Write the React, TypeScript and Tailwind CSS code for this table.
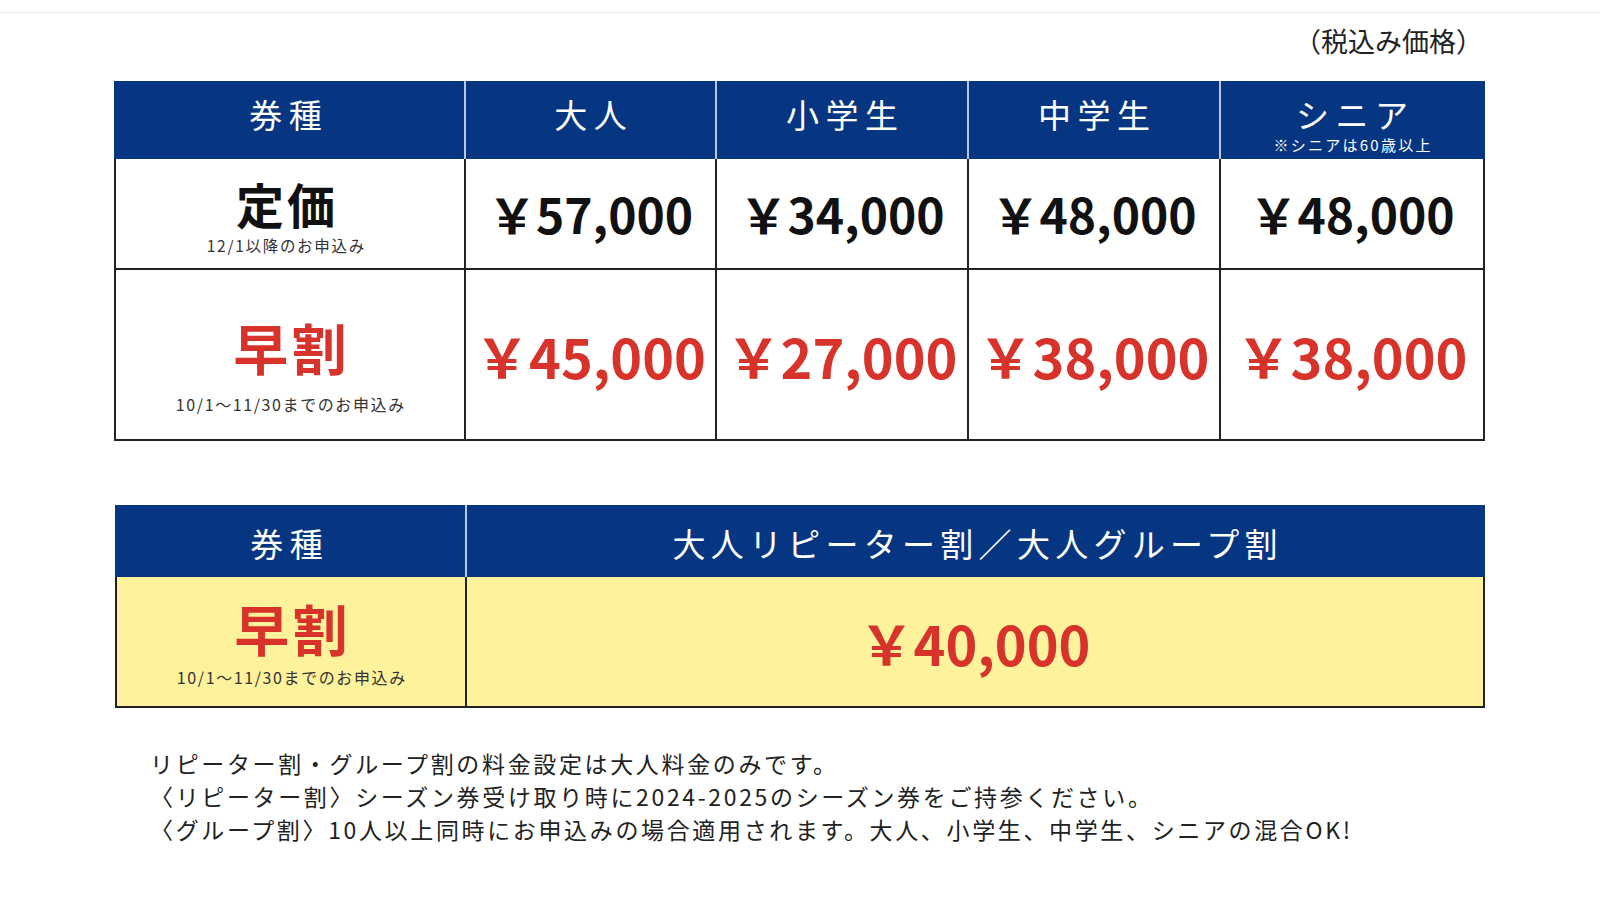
import React from 'react'

const font = { fontFamily: '"Noto Sans CJK JP", "Noto Sans", sans-serif' }

const heads = ['大人', '小学生', '中学生']
const regular = ['￥57,000', '￥34,000', '￥48,000', '￥48,000']
const early = ['￥45,000', '￥27,000', '￥38,000', '￥38,000']

function HeadCell({ children, last, first }: { children: React.ReactNode; last?: boolean; first?: boolean }) {
  return (
    <div
      className={
        'flex flex-col items-center bg-[#063681] text-white ' +
        (last ? '' : 'border-r-2 border-[#b9c6e0] ') +
        (first ? 'pr-[9px]' : '')
      }
    >
      {children}
    </div>
  )
}

export default function App() {
  return (
    <div className="w-[1600px] h-[900px] bg-white pt-[12px]" style={font}>
      <div className="border-t border-[#eeeeee]">
        <div className="flex justify-end pr-[117px] pt-[10px] text-[27px] leading-[36px] text-[#222]">
          （税込み価格）
        </div>

        {/* main price table */}
        <div className="ml-[114px] mt-[22px] w-[1371px]">
          <div className="grid grid-cols-[350px_251px_252px_252px_262px] h-[78px] border-x-2 border-[#063681]">
            <HeadCell first>
              <span className="text-[33px] leading-none tracking-[0.2em] pl-[0.2em] pt-[17px]">券種</span>
            </HeadCell>
            {heads.map((h) => (
              <HeadCell key={h}>
                <span className="text-[33px] leading-none tracking-[0.2em] pl-[0.2em] pt-[17px]">{h}</span>
              </HeadCell>
            ))}
            <HeadCell last>
              <span className="text-[33px] leading-none tracking-[0.2em] pl-[0.2em] pt-[17px]">シニア</span>
              <span className="text-[15px] leading-none tracking-[0.15em] pl-[0.15em] mt-[6px]">※シニアは60歳以上</span>
            </HeadCell>
          </div>

          <div className="grid grid-cols-[350px_251px_252px_252px_262px] border-x-2 border-b-2 border-[#222]">
            <div className="h-[111px] flex flex-col items-center pt-[20px] pr-[9px] border-r-2 border-b-2 border-[#222]">
              <span className="text-[48px] font-bold leading-none tracking-[0.06em] pl-[0.06em] text-[#111]">定価</span>
              <span className="text-[15.5px] leading-none tracking-[0.11em] pl-[0.11em] text-[#333] mt-[11px]">12/1以降のお申込み</span>
            </div>
            {regular.map((p, i) => (
              <div
                key={i}
                className={
                  'h-[111px] flex items-center justify-center pb-[2px] border-b-2 border-[#222] ' +
                  (i < 3 ? 'border-r-2' : '')
                }
              >
                <span className="text-[48px] font-bold leading-none text-[#111]">{p}</span>
              </div>
            ))}

            <div className="h-[169px] flex flex-col items-center pt-[49px] border-r-2 border-[#222]">
              <span className="text-[55px] font-bold leading-none tracking-[0.06em] pl-[0.06em] text-[#d7332b]">早割</span>
              <span className="text-[16px] leading-none tracking-[0.1em] pl-[0.1em] text-[#333] mt-[22px]">10/1〜11/30までのお申込み</span>
            </div>
            {early.map((p, i) => (
              <div
                key={i}
                className={'h-[169px] flex items-center justify-center pt-[2px] border-[#222] ' + (i < 3 ? 'border-r-2' : '')}
              >
                <span className="text-[54px] font-bold leading-none text-[#d7332b]">{p}</span>
              </div>
            ))}
          </div>
        </div>

        {/* group table */}
        <div className="ml-[115px] mt-[64px] w-[1370px]">
          <div className="grid grid-cols-[350px_1016px] h-[72px] border-x-2 border-[#063681]">
            <HeadCell first>
              <span className="text-[33px] leading-none tracking-[0.2em] pl-[0.2em] pt-[22px]">券種</span>
            </HeadCell>
            <HeadCell last>
              <span className="text-[33px] leading-none tracking-[0.16em] pl-[0.16em] pt-[22px]">大人リピーター割／大人グループ割</span>
            </HeadCell>
          </div>
          <div className="grid grid-cols-[350px_1016px] h-[131px] bg-[#fff29c] border-x-2 border-b-2 border-[#222]">
            <div className="flex flex-col items-center pt-[23px] border-r-2 border-[#222]">
              <span className="text-[55px] font-bold leading-none tracking-[0.06em] pl-[0.06em] text-[#d7332b]">早割</span>
              <span className="text-[16px] leading-none tracking-[0.1em] pl-[0.1em] text-[#333] mt-[14px]">10/1〜11/30までのお申込み</span>
            </div>
            <div className="flex items-center justify-center pt-[2px]">
              <span className="text-[54px] font-bold leading-none text-[#d7332b]">￥40,000</span>
            </div>
          </div>
        </div>

        {/* notes */}
        <div className="ml-[150px] mt-[39px] text-[23px] leading-[33px] tracking-[0.115em] text-[#222]">
          <p>リピーター割・グループ割の料金設定は大人料金のみです。</p>
          <p>〈リピーター割〉シーズン券受け取り時に2024-2025のシーズン券をご持参ください。</p>
          <p>〈グループ割〉10人以上同時にお申込みの場合適用されます。大人、小学生、中学生、シニアの混合OK!</p>
        </div>
      </div>
    </div>
  )
}
